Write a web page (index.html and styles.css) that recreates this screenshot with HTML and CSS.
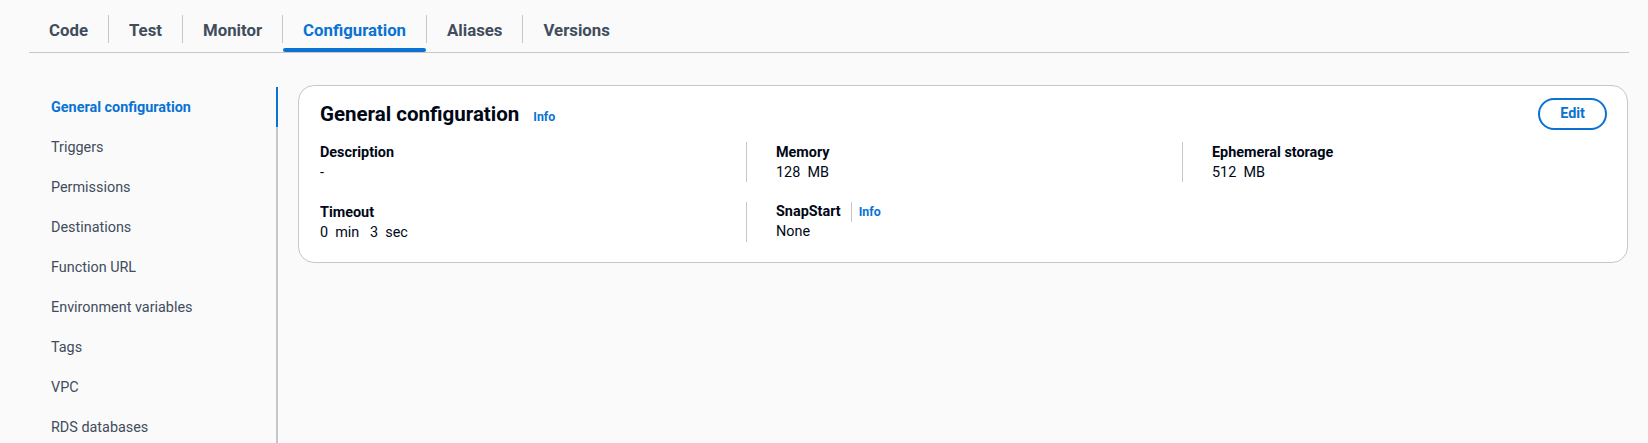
FILE: index.html
```html
<!DOCTYPE html>
<html lang="en">
<head>
<meta charset="utf-8">
<title>Configuration</title>
<link rel="stylesheet" href="styles.css">
</head>
<body>
<div class="page">
  <nav class="tabs">
    <div class="tab">Code</div>
    <div class="tab">Test</div>
    <div class="tab">Monitor</div>
    <div class="tab active">Configuration</div>
    <div class="tab">Aliases</div>
    <div class="tab">Versions</div>
  </nav>
  <div class="main">
    <aside class="side">
      <ul class="side-list">
        <li class="side-item active">General configuration</li>
        <li class="side-item">Triggers</li>
        <li class="side-item">Permissions</li>
        <li class="side-item">Destinations</li>
        <li class="side-item">Function URL</li>
        <li class="side-item">Environment variables</li>
        <li class="side-item">Tags</li>
        <li class="side-item">VPC</li>
        <li class="side-item">RDS databases</li>
      </ul>
    </aside>
    <section class="content">
      <div class="card">
        <div class="card-header">
          <div class="title-wrap">
            <h2 class="title">General configuration</h2>
            <span class="info">Info</span>
          </div>
          <button class="btn">Edit</button>
        </div>
        <div class="grid">
          <div class="cell">
            <div class="label">Description</div>
            <div class="value">-</div>
          </div>
          <div class="cell divided">
            <div class="label">Memory</div>
            <div class="value">128&nbsp; MB</div>
          </div>
          <div class="cell divided">
            <div class="label">Ephemeral storage</div>
            <div class="value">512&nbsp; MB</div>
          </div>
          <div class="cell">
            <div class="label">Timeout</div>
            <div class="value">0&nbsp; min&nbsp;&nbsp; 3&nbsp; sec</div>
          </div>
          <div class="cell divided">
            <div class="label label-row">SnapStart<span class="vsep"></span><span class="info">Info</span></div>
            <div class="value">None</div>
          </div>
          <div class="cell"></div>
        </div>
      </div>
    </section>
  </div>
</div>
</body>
</html>
```
FILE: styles.css
```css
html, body {
  margin: 0;
  padding: 0;
  overflow: hidden;
  height: 100%;
}
body {
  background: #fafafa;
  font-family: Roboto, "Liberation Sans", Arial, sans-serif;
  color: #000716;
}
.page {
  display: flex;
  flex-direction: column;
  height: 100%;
}

/* Tabs */
.tabs {
  display: flex;
  align-items: stretch;
  margin: 8px 19px 0 29px;
  height: 44px;
  border-bottom: 1px solid #c6c6cd;
}
.tab {
  position: relative;
  display: flex;
  align-items: center;
  padding: 0 20px;
  font-size: 16.8px;
  font-weight: 700;
  line-height: 20px;
  color: #414d5c;
  white-space: nowrap;
}
.tab + .tab {
  border-left: 1px solid transparent;
}
.tab + .tab::before {
  content: "";
  position: absolute;
  left: -1px;
  top: 7px;
  width: 1px;
  height: 28px;
  background: #c6c6cd;
}
.tab.active {
  color: #0972d3;
}
.tab.active::after {
  content: "";
  position: absolute;
  left: 0;
  right: 0;
  bottom: 0;
  height: 4px;
  border-radius: 2px;
  background: #0972d3;
}

/* Main */
.main {
  flex: 1;
  display: flex;
  gap: 20px;
  padding: 32px 20px 0 0;
  min-height: 0;
}
.side {
  width: 276px;
  flex-shrink: 0;
  margin-top: 2px;
  border-right: 2px solid #c6c6cd;
  box-sizing: content-box;
}
.side-list {
  list-style: none;
  margin: 0;
  padding: 0;
}
.side-item {
  position: relative;
  padding: 11px 0 9px 51px;
  font-size: 14.4px;
  line-height: 20px;
  color: #414d5c;
  white-space: nowrap;
}
.side-item.active {
  color: #0972d3;
  font-weight: 700;
}
.side-item.active::after {
  content: "";
  position: absolute;
  top: 0;
  right: -2px;
  width: 2px;
  height: 100%;
  background: #0972d3;
}

.content {
  flex: 1;
  min-width: 0;
}

/* Card */
.card {
  background: #ffffff;
  border: 1px solid #c6c6cd;
  border-radius: 16px;
  padding: 12px 20px 20px 21px;
}
.card-header {
  display: flex;
  align-items: center;
  justify-content: space-between;
  height: 32px;
  margin-bottom: 12px;
}
.title-wrap {
  display: flex;
  align-items: baseline;
  gap: 14px;
}
.title {
  margin: 0;
  font-size: 20.5px;
  font-weight: 700;
  line-height: 28px;
  color: #000716;
}
.info {
  font-size: 12.4px;
  font-weight: 700;
  line-height: 16px;
  color: #0972d3;
}
.btn {
  height: 32px;
  padding: 0 20px;
  border: 2px solid #0972d3;
  border-radius: 20px;
  background: #ffffff;
  color: #0972d3;
  font-family: inherit;
  font-size: 14.4px;
  font-weight: 700;
  line-height: 20px;
  cursor: pointer;
}

/* Grid */
.grid {
  display: grid;
  grid-template-columns: 426px 436px 1fr;
  row-gap: 20px;
}
.cell {
  min-height: 40px;
}
.cell.divided {
  border-left: 1px solid #c6c6cd;
  padding-left: 29px;
}
.label {
  padding-top: 1px;
  font-size: 14.4px;
  font-weight: 700;
  line-height: 20px;
  color: #000716;
}
.label-row {
  display: flex;
  align-items: center;
  padding-top: 0;
}
.vsep {
  display: inline-block;
  width: 1px;
  height: 20px;
  background: #c6c6cd;
  margin: 0 7px 0 10px;
}
.value {
  font-size: 14.4px;
  line-height: 19px;
  color: #000716;
}
```
